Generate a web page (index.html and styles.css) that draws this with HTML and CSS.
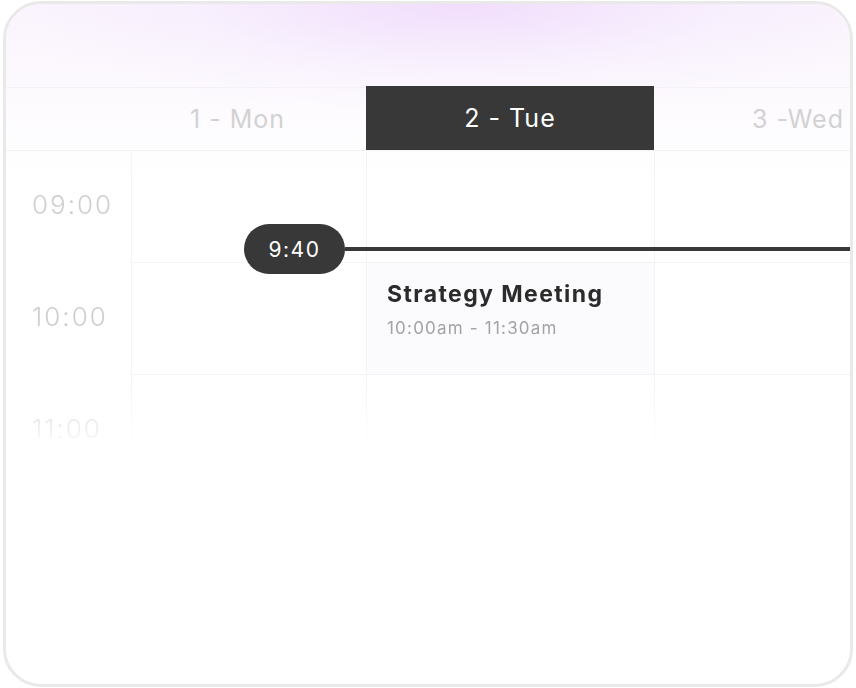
FILE: index.html
```html
<!DOCTYPE html>
<html lang="en">
<head>
<meta charset="utf-8">
<title>Calendar</title>
<link rel="stylesheet" href="styles.css">
</head>
<body>
<div class="card">
  <div class="glow"></div>
  <div class="calendar">
    <div class="head">
      <div class="head-cell"></div>
      <div class="head-cell">1 - Mon</div>
      <div class="head-cell active">2 - Tue</div>
      <div class="head-cell">3 -Wed</div>
    </div>
    <div class="body">
      <div class="times">
        <div class="time">09:00</div>
        <div class="time">10:00</div>
        <div class="time">11:00</div>
      </div>
      <div class="col">
        <div class="slot"></div>
        <div class="slot"></div>
        <div class="slot"></div>
      </div>
      <div class="col">
        <div class="slot"></div>
        <div class="slot event">
          <div class="event-title">Strategy Meeting</div>
          <div class="event-time">10:00am - 11:30am</div>
        </div>
        <div class="slot"></div>
      </div>
      <div class="col">
        <div class="slot"></div>
        <div class="slot"></div>
        <div class="slot"></div>
      </div>
    </div>
    <div class="now">
      <div class="now-pill">9:40</div>
      <div class="now-line"></div>
    </div>
  </div>
</div>
</body>
</html>
```
FILE: styles.css
```css
* { box-sizing: border-box; }
html, body { margin: 0; padding: 0; background: #ffffff; }
body { font-family: "Inter", "Liberation Sans", sans-serif; }

.card {
  position: relative;
  width: 850px;
  height: 686px;
  margin: 1px 0 0 3px;
  border: 3px solid #e9e9e9;
  border-radius: 38px;
  overflow: hidden;
  background: #ffffff;
}

.glow {
  position: absolute;
  left: 0; right: 0; top: 0;
  height: 190px;
  background:
    radial-gradient(ellipse 460px 110px at 54% 0, rgba(238, 214, 252, 0.75), rgba(243, 230, 253, 0.3) 60%, rgba(255,255,255,0) 100%),
    linear-gradient(to bottom, rgba(249, 242, 253, 0.85) 0, rgba(251, 247, 253, 0.65) 90px, rgba(255,255,255,0) 170px);
  pointer-events: none;
}

.calendar {
  position: relative;
  padding-top: 83px;
}

.head {
  display: grid;
  grid-template-columns: 103px 257px 288px 288px;
  height: 64px;
  border-top: 1px solid #f4f1f6;
  border-bottom: 1px solid #f3f3f3;
}
.head-cell {
  display: flex;
  align-items: center;
  justify-content: center;
  font-size: 25px;
  font-weight: 400;
  color: #d2d2d2;
  letter-spacing: 1px;
}
.head-cell.active {
  background: #383838;
  color: #ffffff;
  margin-top: -2px;
}

.body {
  display: grid;
  grid-template-columns: 125px 235px 288px 288px;
  -webkit-mask-image: linear-gradient(to bottom, #000 0, #000 230px, rgba(0,0,0,0.15) 290px, rgba(0,0,0,0) 330px);
  mask-image: linear-gradient(to bottom, #000 0, #000 230px, rgba(0,0,0,0.15) 290px, rgba(0,0,0,0) 330px);
  height: 340px;
}
.times { display: flex; flex-direction: column; }
.time {
  height: 112px;
  display: flex;
  align-items: center;
  padding-left: 26px;
  padding-bottom: 6px;
  font-size: 26px;
  font-weight: 300;
  letter-spacing: 2px;
  color: #cfcfcf;
}
.col {
  display: flex;
  flex-direction: column;
  border-left: 1px solid #f4f4f4;
}
.slot {
  height: 112px;
  border-bottom: 1px solid #f3f3f3;
  flex: none;
}
.event {
  background: #fbfbfd;
  padding: 17px 20px;
}
.event-title {
  font-size: 23px;
  font-weight: 700;
  color: #2b2b2b;
  letter-spacing: 1.4px;
}
.event-time {
  margin-top: 10px;
  font-size: 17px;
  font-weight: 400;
  color: #a3a3a3;
  letter-spacing: 1.2px;
}

.now {
  position: absolute;
  left: 238px;
  top: 220px;
  right: 0;
  display: flex;
  align-items: center;
}
.now-pill {
  width: 101px;
  height: 50px;
  border-radius: 25px;
  background: #383838;
  color: #ffffff;
  font-size: 21px;
  letter-spacing: 1.5px;
  display: flex;
  align-items: center;
  justify-content: center;
  flex: none;
}
.now-line {
  flex: 1;
  height: 4px;
  background: #383838;
}
```
